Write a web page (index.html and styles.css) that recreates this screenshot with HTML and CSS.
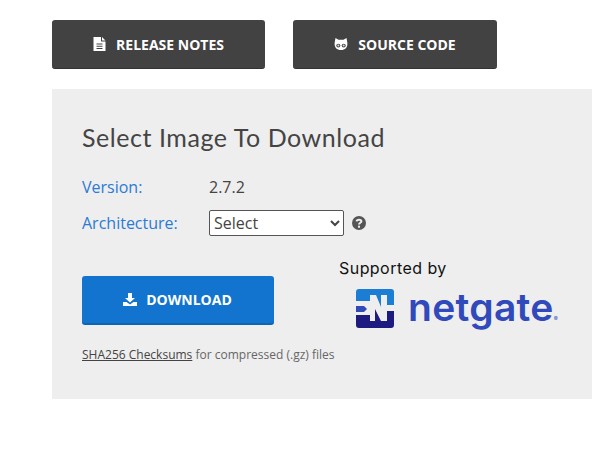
FILE: index.html
```html
<!DOCTYPE html>
<html lang="en">

<head>
    <meta charset="UTF-8">
    <meta name="viewport" content="width=device-width, initial-scale=1.0">
    <title>Download</title>
    <link rel="stylesheet" href="styles.css">
</head>

<body>

    <div class="top-buttons">
        <a class="btn btn-notes" href="#">
            <svg class="icon-file" viewBox="0 0 12 14"><path fill="#fff" fill-rule="evenodd" d="M0 0h7.500v4.500H12V14H0zM8.500 0 12 3.500H8.500zM3 6.500v1h6v-1zM3 8.700v1h6v-1zM3 10.900v1h6v-1z"/></svg>
            RELEASE NOTES
        </a>
        <a class="btn btn-source" href="#">
            <svg class="icon-cat" viewBox="0 0 14 12"><path fill="#fff" d="M1.500 0l3 1.800h5l3-1.800.8 4.500C14 9.500 11 12 7 12S0 9.500.7 4.500z"/><ellipse cx="4.300" cy="7.600" rx="2" ry="1.900" fill="#444"/><ellipse cx="9.700" cy="7.600" rx="2" ry="1.900" fill="#444"/><circle cx="4.300" cy="7.600" r="1" fill="#ddd"/><circle cx="9.700" cy="7.600" r="1" fill="#ddd"/></svg>
            SOURCE CODE
        </a>
    </div>

    <div class="panel">
        <h2>Select Image To Download</h2>

        <div class="field">
            <span class="label">Version:</span>
            <span class="value">2.7.2</span>
        </div>
        <div class="field field-arch">
            <span class="label">Architecture:</span>
            <select class="arch-select">
                <option>Select</option>
            </select>
            <svg class="icon-help" viewBox="0 0 14 14"><circle cx="7" cy="7" r="7" fill="#555"/><path fill="none" stroke="#eee" stroke-width="2" d="M4.600 5.400C4.800 3.200 9.400 3 9.400 5.300 9.400 6.800 7 6.800 7 8.600"/><rect x="6" y="9.700" width="2" height="2" fill="#eee"/></svg>
        </div>

        <div class="download-row">
            <a class="btn-download" href="#">
                <svg class="icon-download" viewBox="0 0 14 13"><path fill="#fff" d="M5 0h4v5h3L7 9.500 2 5h3zM0 9h3.500L7 11.500 10.500 9H14v4H0z"/></svg>
                DOWNLOAD
            </a>
            <div class="support">
                <div class="support-title">Supported by</div>
                <div class="netgate">
                    <svg class="netgate-mark" viewBox="0 0 38 39">
                        <path fill="#1b7ed4" d="M3 0h32a3 3 0 0 1 3 3v13h-7V6h-6v12L20 6h-6v6H0V3a3 3 0 0 1 3-3z"/>
                        <path fill="#3249b8" d="M0 17h8l3 3-3 3H0z"/>
                        <path fill="#1d1a80" d="M0 26h14v6h5V20l6 12h6V22h7v14a3 3 0 0 1-3 3H3a3 3 0 0 1-3-3z"/>
                    </svg>
                    <span class="netgate-name">netgate<span class="netgate-reg">®</span></span>
                </div>
            </div>
        </div>

        <p class="checksums"><a href="#">SHA256 Checksums</a> for compressed (.gz) files</p>
    </div>

</body>

</html>
```

FILE: styles.css
```css
body {
    font-family: "Open Sans", sans-serif;
    margin: 0;
    padding: 20px 21px 0 52px;
    background-color: #fff;
    color: #444;
}

.top-buttons {
    display: flex;
    gap: 28px;
}

.btn {
    display: flex;
    align-items: center;
    justify-content: center;
    gap: 10px;
    height: 49px;
    box-sizing: border-box;
    background-color: #424242;
    border-bottom: 1px solid #333;
    border-radius: 3px;
    color: #fff;
    font-size: 14px;
    font-weight: 700;
    text-decoration: none;
}

.btn-notes {
    width: 213px;
}

.btn-source {
    width: 204px;
}

.icon-file {
    width: 13px;
    height: 14px;
}

.icon-cat {
    width: 14px;
    height: 12px;
}

.panel {
    margin-top: 20px;
    height: 310px;
    box-sizing: border-box;
    padding: 29px 30px;
    background-color: #eee;
}

h2 {
    margin: 0 0 18px;
    font-family: "Lato", sans-serif;
    font-size: 25px;
    font-weight: 400;
    line-height: 38px;
    color: #444;
    letter-spacing: 0.55px;
}

.field {
    display: flex;
    align-items: center;
    height: 26px;
    font-size: 16px;
}

.field-arch {
    margin-top: 10px;
}

.label {
    width: 127px;
    color: #2b7bd4;
}

.value {
    color: #444;
}

.arch-select {
    width: 135px;
    height: 26px;
    padding: 0;
    font-family: "Open Sans", sans-serif;
    font-size: 16px;
    color: #444;
    background-color: #fff;
    border: 1px solid #555;
    border-radius: 2px;
}

.icon-help {
    width: 14px;
    height: 14px;
    margin-left: 8px;
}

.download-row {
    display: flex;
    margin-top: 22px;
}

.btn-download {
    display: flex;
    align-items: center;
    justify-content: center;
    gap: 9px;
    width: 192px;
    height: 49px;
    box-sizing: border-box;
    margin-top: 18px;
    padding-right: 1px;
    background-color: #1274cf;
    border-bottom: 2px solid #0f65b5;
    border-radius: 3px;
    color: #fff;
    font-size: 14px;
    font-weight: 700;
    text-decoration: none;
}

.icon-download {
    width: 14px;
    height: 13px;
}

.support {
    margin-left: 65px;
}

.support-title {
    font-family: "Inter", sans-serif;
    font-size: 16px;
    line-height: 20px;
    letter-spacing: 0.45px;
    color: #111;
}

.netgate {
    display: flex;
    align-items: flex-start;
    gap: 14px;
    height: 39px;
    margin: 11px 0 0 17px;
}

.netgate-mark {
    width: 38px;
    height: 39px;
}

.netgate-name {
    font-family: "Inter", sans-serif;
    font-size: 39px;
    font-weight: 600;
    line-height: 36px;
    letter-spacing: 0.3px;
    color: #3049bb;
}

.netgate-reg {
    font-size: 6px;
    font-weight: 400;
    line-height: 0;
    letter-spacing: 0;
}

.checksums {
    margin: 18px 0 0;
    font-size: 12px;
    color: #666;
}

.checksums a {
    color: #444;
}
```
